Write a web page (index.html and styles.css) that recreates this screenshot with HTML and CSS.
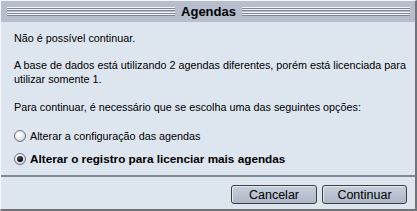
FILE: index.html
```html
<!DOCTYPE html>
<html>
<head>
<meta charset="utf-8">
<link rel="stylesheet" href="styles.css">
</head>
<body>
<div class="window">
  <div class="titlebar">
    <div class="grooves"></div>
    <div class="title">Agendas</div>
    <div class="grooves"></div>
  </div>
  <div class="content">
    <p class="p1">Não é possível continuar.</p>
    <p class="p2">A base de dados está utilizando 2 agendas diferentes, porém está licenciada para utilizar somente 1.</p>
    <p class="p3">Para continuar, é necessário que se escolha uma das seguintes opções:</p>
    <div class="options">
      <label class="opt"><span class="radio"></span>Alterar a configuração das agendas</label>
      <label class="opt sel"><span class="radio on"></span>Alterar o registro para licenciar mais agendas</label>
    </div>
  </div>
  <div class="footer">
    <button class="btn btn-cancel">Cancelar</button>
    <button class="btn btn-cont">Continuar</button>
  </div>
</div>
</body>
</html>
```
FILE: styles.css
```css
html, body { margin: 0; padding: 0; }
body { width: 417px; height: 211px; overflow: hidden; background: #dde5ef; }
.window {
  box-sizing: border-box;
  width: 417px; height: 211px;
  background: #dde5ef;
  border-left: 1px solid #f4f6f9;
  border-top: 1px solid #f4f6f9;
  border-right: 2px solid #707478;
  border-bottom: 2px solid #707478;
  display: flex; flex-direction: column;
  font-family: "Liberation Sans", Arial, sans-serif;
  font-size: 11px;
  color: #000;
}
.titlebar {
  height: 21px;
  background: #b6becd;
  display: flex; align-items: center;
  padding: 0 5px 0 6px;
  gap: 4px;
}
.grooves {
  flex: 1;
  height: 10px;
  background: repeating-linear-gradient(to bottom, #f2f4f8 0, #f2f4f8 1px, #7d8594 1px, #7d8594 2px, #b6becd 2px, #b6becd 2.5px);
}
.title {
  font-weight: bold;
  font-size: 13px;
  padding: 0 2px;
}
.content {
  flex: 1;
  padding: 9px 2px 0 13px;
  font-size: 10.8px;
  line-height: 14px;
}
.content p { margin: 0; }
.p2 { margin-top: 13px !important; }
.p3 { margin-top: 14px !important; }
.options { margin-top: 15px; display: flex; flex-direction: column; gap: 9px; }
.opt { display: flex; align-items: center; gap: 4px; }
.opt.sel { font-weight: bold; font-size: 11.75px; }
.radio {
  box-sizing: border-box;
  flex: none;
  width: 12px; height: 12px;
  border-radius: 50%;
  border: 1px solid #6c7380;
  background: radial-gradient(circle at 40% 35%, #ffffff 0, #eef2f7 35%, #b3bccb 100%);
  position: relative;
}
.radio.on::after {
  content: "";
  position: absolute;
  left: 2px; top: 2px;
  width: 6px; height: 6px;
  border-radius: 50%;
  background: radial-gradient(circle at 40% 35%, #555 0, #000 70%);
}
.footer {
  border-top: 2px solid #7f8792;
  height: 34px;
  box-sizing: border-box;
  display: flex; justify-content: flex-end; align-items: flex-start;
  padding: 8px 8px 0 0;
  gap: 5px;
}
.btn {
  box-sizing: border-box;
  height: 19px;
  border: 1px solid #3a3d42;
  border-radius: 3px;
  background: linear-gradient(#c6cedb, #aeb7c6);
  box-shadow: inset 1px 1px 0 #e6eaf0;
  font-family: "Liberation Sans", Arial, sans-serif;
  font-size: 12.5px;
  color: #000;
  padding: 0;
}
.btn-cancel { width: 86px; }
.btn-cont { width: 85px; }
```
